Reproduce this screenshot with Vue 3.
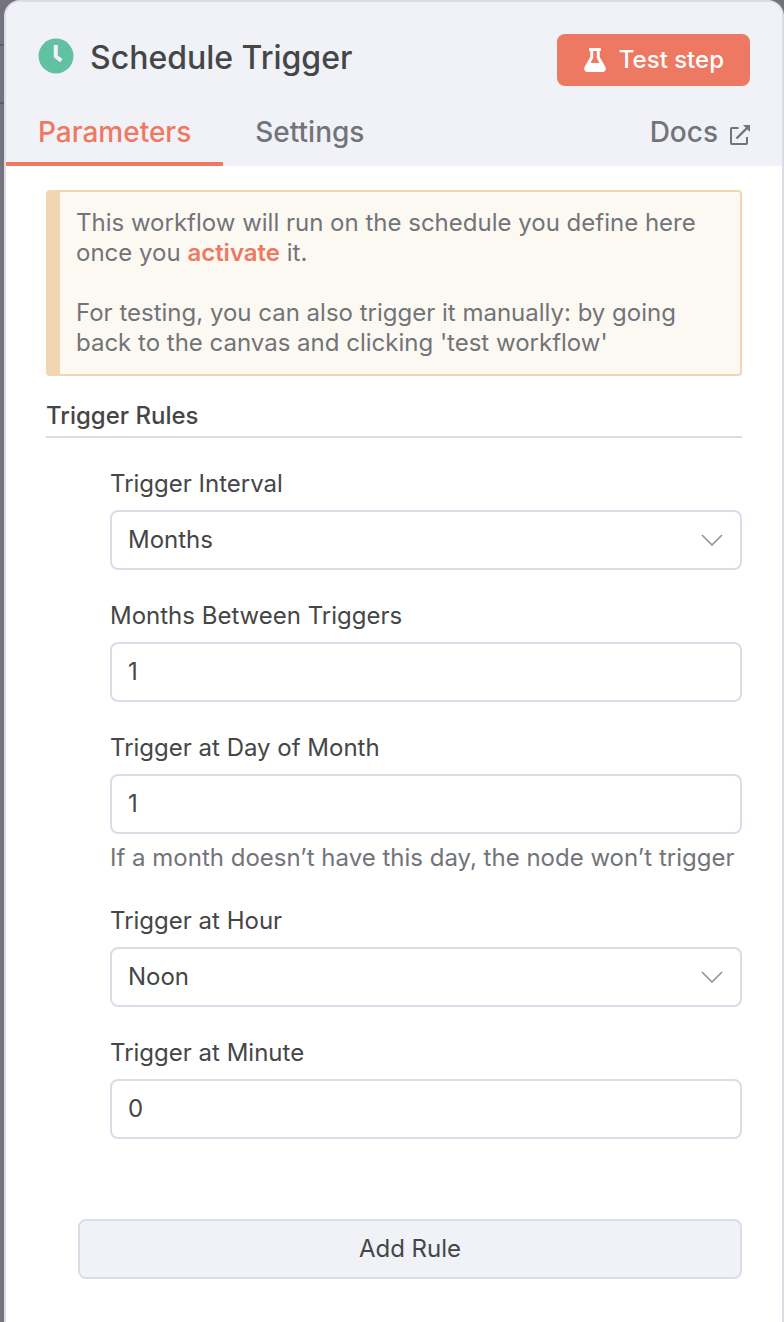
<script setup>
import { ref } from 'vue'

const tabs = ['Parameters', 'Settings']
const activeTab = ref('Parameters')

const fields = ref([
  { id: 'interval', label: 'Trigger Interval', value: 'Months', options: ['Minutes', 'Hours', 'Days', 'Weeks', 'Months'] },
  { id: 'months', label: 'Months Between Triggers', value: '1' },
  { id: 'day', label: 'Trigger at Day of Month', value: '1', hint: 'If a month doesn’t have this day, the node won’t trigger' },
  { id: 'hour', label: 'Trigger at Hour', value: 'Noon', options: ['Midnight', '6am', 'Noon', '6pm'] },
  { id: 'minute', label: 'Trigger at Minute', value: '0' },
])
</script>

<template>
  <div class="canvas">
    <main class="panel">
      <header class="header">
        <div class="title-row">
          <svg class="clock" viewBox="0 0 36 36" aria-hidden="true">
            <circle cx="18" cy="18" r="17.5" fill="#62c1a2" />
            <path d="M17.8 7v11.500l5.500 4.200" fill="none" stroke="#f1f2f8" stroke-width="4" stroke-linecap="butt" stroke-linejoin="round" />
          </svg>
          <h1 class="title">Schedule Trigger</h1>
          <button type="button" class="test">
            <svg class="flask" viewBox="0 0 22 24" aria-hidden="true">
              <path fill="#fff" fill-rule="evenodd" d="M6 0h10a1 1 0 0 1 1 1v1a1 1 0 0 1-1 1h-.3v6l5.600 9.800C22.600 21.400 21.200 24 18.600 24H3.400C.8 24-.6 21.400.7 18.800L6.300 9V3H6a1 1 0 0 1-1-1V1a1 1 0 0 1 1-1zM9.200 3v6.700L6.600 15h8.800l-2.600-5.300V3z" />
            </svg>
            <span>Test step</span>
          </button>
        </div>
        <nav class="tabs">
          <button
            v-for="tab in tabs"
            :key="tab"
            type="button"
            class="tab"
            :class="{ active: tab === activeTab }"
            @click="activeTab = tab"
          >{{ tab }}</button>
          <a class="docs" href="#docs">
            <span>Docs</span>
            <svg class="external" viewBox="0 0 20 20" aria-hidden="true">
              <path d="M8.500 3H2a1 1 0 0 0-1 1v14a1 1 0 0 0 1 1h14a1 1 0 0 0 1-1V12" fill="none" stroke="currentColor" stroke-width="2" />
              <path d="M6.500 13.500 17 3" fill="none" stroke="currentColor" stroke-width="2.400" />
              <path d="M13 0h7v7z" fill="currentColor" />
            </svg>
          </a>
        </nav>
      </header>

      <section class="content">
        <div class="notice">
          <p>This workflow will run on the schedule you define here once you <a href="#activate">activate</a> it.</p>
          <p>For testing, you can also trigger it manually: by going back to the canvas and clicking 'test workflow'</p>
        </div>

        <h2 class="section-title">Trigger Rules</h2>

        <form class="rules" @submit.prevent>
          <div v-for="field in fields" :key="field.id" class="field">
            <label class="label" :for="field.id">{{ field.label }}</label>
            <div v-if="field.options" class="select-wrap">
              <select :id="field.id" v-model="field.value" class="control">
                <option v-for="option in field.options" :key="option">{{ option }}</option>
              </select>
              <svg class="chevron" viewBox="0 0 22 12" aria-hidden="true">
                <path d="M1 1l10 10L21 1" fill="none" stroke="#909298" stroke-width="1.600" />
              </svg>
            </div>
            <input v-else :id="field.id" v-model="field.value" class="control" type="text" inputmode="numeric" />
            <p v-if="field.hint" class="hint">{{ field.hint }}</p>
          </div>
        </form>

        <button type="button" class="add">Add Rule</button>
      </section>
    </main>
  </div>
</template>

<style>
body {
  margin: 0;
  background: #74727c;
}
</style>

<style scoped>
.canvas {
  box-sizing: border-box;
  min-height: 100vh;
  padding-left: 4px;
  display: flex;
  background:
    linear-gradient(#5f5e6b, #5f5e6b) 0 44px / 4px 2px no-repeat,
    linear-gradient(#5f5e6b, #5f5e6b) 0 102px / 4px 2px no-repeat,
    #74727c;
  font-family: Inter, "Liberation Sans", sans-serif;
  font-size: 24px;
  color: #454647;
}

.panel {
  flex: 1;
  min-width: 0;
  border: 2px solid #dadde8;
  border-bottom: 0;
  border-radius: 16px 16px 0 0;
  background: #fff;
  overflow: hidden;
}

button,
input,
select {
  font: inherit;
  color: inherit;
  margin: 0;
}

h1,
h2,
p {
  margin: 0;
  font-weight: 400;
}

.header {
  background: #f1f2f8;
  padding-top: 32px;
}

.title-row {
  display: flex;
  align-items: center;
  padding: 0 32px;
}

.clock {
  width: 36px;
  height: 36px;
  margin-bottom: 8px;
}

.title {
  flex: 1;
  margin-left: 16px;
  font-size: 32px;
  line-height: 40px;
  font-weight: 500;
  margin-bottom: 4px;
}

.test {
  display: flex;
  align-items: center;
  gap: 13px;
  height: 52px;
  padding: 0 26px 2px 27px;
  border: 0;
  border-radius: 8px;
  background: #ee7963;
  color: #fff;
  font-weight: 500;
}

.flask {
  width: 22px;
  height: 24px;
  margin-top: 2px;
}

.tabs {
  display: flex;
  align-items: stretch;
  height: 80px;
}

.tab {
  padding: 24px 32px 8px;
  border: 0;
  border-bottom: 4px solid transparent;
  background: none;
  color: #727479;
  font-size: 28px;
  font-weight: 500;
}

.tab.active {
  color: #ee7963;
  border-bottom-color: #ee7963;
}

.docs {
  display: flex;
  align-items: center;
  gap: 12px;
  margin-left: auto;
  padding: 24px 32px 12px 0;
  color: #727479;
  font-size: 28px;
  font-weight: 500;
  text-decoration: none;
}

.external {
  width: 20px;
  height: 20px;
  margin-top: 6px;
}

.content {
  padding: 24px 40px 43px;
}

.notice {
  display: grid;
  gap: 30px;
  padding: 16px;
  border: 2px solid #f0d7b2;
  border-left-width: 14px;
  border-radius: 4px;
  background: #fcf9f2;
  color: #727479;
  line-height: 30px;
}

.notice a {
  color: #ee7963;
  font-weight: 600;
  text-decoration: none;
}

.section-title {
  margin-top: 24px;
  padding-bottom: 4px;
  border-bottom: 2px solid #dadde8;
  font-size: 24px;
  line-height: 32px;
  font-weight: 500;
}

.rules {
  display: grid;
  gap: 30px;
  margin: 30px 0 80px 64px;
}

.label {
  display: block;
  margin-bottom: 10px;
  line-height: 32px;
}

.control {
  display: block;
  box-sizing: border-box;
  width: 100%;
  height: 60px;
  padding: 0 16px 2px;
  border: 2px solid #dadde8;
  border-radius: 8px;
  background: #fff;
  appearance: none;
  outline: none;
}

.select-wrap {
  display: grid;
  align-items: center;
}

.select-wrap > * {
  grid-area: 1 / 1;
}

.chevron {
  width: 22px;
  height: 12px;
  margin-right: 19px;
  justify-self: end;
  pointer-events: none;
}

.hint {
  margin: 8px 0 1px;
  line-height: 32px;
  color: #727479;
}

.add {
  display: block;
  box-sizing: border-box;
  width: calc(100% - 32px);
  height: 60px;
  margin-left: 32px;
  padding: 0 16px 2px;
  border: 2px solid #dadde8;
  border-radius: 8px;
  background: #f1f2f8;
}
</style>
